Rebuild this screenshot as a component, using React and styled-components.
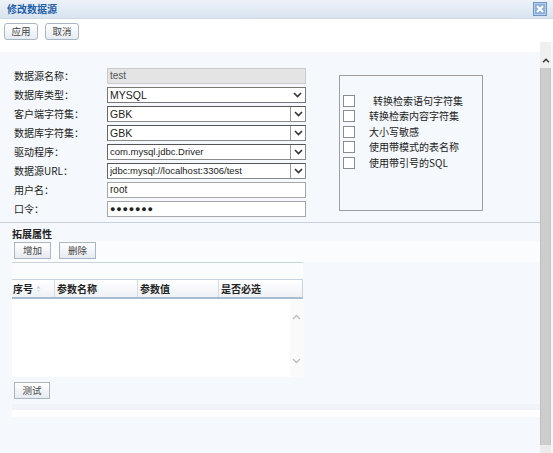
import React from 'react';
import styled, { createGlobalStyle } from 'styled-components';

const CJK = `"Noto Sans CJK SC", "Liberation Sans", sans-serif`;
const LAT = `"Liberation Sans", "Noto Sans CJK SC", sans-serif`;

const GlobalStyle = createGlobalStyle`
  html, body { margin: 0; padding: 0; }
  body { width: 553px; height: 453px; overflow: hidden; font-family: ${LAT}; }
  * { box-sizing: border-box; }
`;

const Window = styled.div`
  width: 553px;
  height: 453px;
  display: flex;
  flex-direction: column;
  background: #f5f8fc;
  overflow: hidden;
`;

const TitleBar = styled.div`
  height: 19px;
  flex: none;
  display: flex;
  align-items: center;
  justify-content: space-between;
  padding: 0 6px 0 7px;
  background: linear-gradient(#edf2f8, #d9e4f0);
  border-bottom: 1px solid #ccd9e7;
`;

const Title = styled.span`
  font: bold 10px/12px ${CJK};
  color: #1d5fa8;
`;

const Toolbar = styled.div`
  height: 23px;
  flex: none;
  background: #fff;
  display: flex;
  gap: 7px;
  padding: 4px 4px 0;
  align-items: flex-start;
`;

const Button = styled.button`
  width: ${(p) => p.$w || 34}px;
  height: 17px;
  padding: 0;
  border: 1px solid #a9b6c4;
  border-radius: ${(p) => (p.$round ? 3 : 0)}px;
  background: linear-gradient(#ffffff, #e6ebf1);
  font: 9.5px/15px ${CJK};
  color: #444;
`;

const Body = styled.div`
  flex: 1;
  min-height: 0;
  display: flex;
`;

const Main = styled.div`
  flex: 1;
  display: flex;
  flex-direction: column;
`;

const TopGap = styled.div`
  height: 10px;
  background: #fff;
`;

const FormArea = styled.div`
  display: flex;
  align-items: flex-start;
  padding: 16px 0 0 14px;
`;

const FormGrid = styled.div`
  display: grid;
  grid-template-columns: 93px 199px;
  grid-auto-rows: 16px;
  row-gap: 3px;
`;

const Label = styled.span`
  font: 10px/16px ${CJK};
  color: #222;
`;

const FieldBase = styled.div`
  height: 16px;
  display: flex;
  align-items: center;
  font: ${(p) => p.$size || 10}px/14px ${LAT};
  color: #222;
  background: #fff;
`;

const ReadOnlyField = styled(FieldBase)`
  background: #e4e4e4;
  border: 1px solid #cbcbcb;
  color: #555;
  padding-left: 2px;
`;

const TextField = styled(FieldBase)`
  border: 1px solid #a6a6a6;
  padding-left: 2px;
`;

const SelectField = styled(FieldBase)`
  border: 1px solid #777;
  padding-left: 2px;
  justify-content: space-between;
`;

const ComboField = styled(FieldBase)`
  border: 1px solid #8a8a8a;
  border-top-color: #555;
  border-left-color: #666;
  padding-left: 2px;
  justify-content: space-between;
`;

const ValueText = styled.span`
  flex: 1;
  white-space: nowrap;
  overflow: hidden;
`;

const ArrowBox = styled.span`
  width: 15px;
  height: 100%;
  display: flex;
  align-items: center;
  justify-content: center;
  border-left: ${(p) => (p.$boxed ? '1px solid #9a9a9a' : 'none')};
  background: #fff;
`;

const Dots = styled.span`
  font: bold 9px/14px ${LAT};
  letter-spacing: 0.8px;
  color: #222;
`;

const OptionsBox = styled.div`
  margin: 7px 0 0 33px;
  width: 144px;
  height: 136px;
  border: 1px solid #9e9e9e;
  padding: 17px 0 0 3px;
  display: flex;
  flex-direction: column;
`;

const OptionRow = styled.label`
  height: 15.5px;
  display: flex;
  align-items: center;
`;

const CheckBox = styled.span`
  width: 12px;
  height: 12px;
  flex: none;
  border: 1px solid #8c8c8c;
  background: #fff;
`;

const OptionText = styled.span`
  margin-left: ${(p) => p.$indent}px;
  font: 10px/14px ${CJK};
  color: #222;
  white-space: nowrap;
`;

const Divider = styled.div`
  margin-top: 5px;
  height: 1px;
  background: #c5d1de;
`;

const SectionTitle = styled.div`
  height: 18px;
  padding: 4px 0 0 12px;
  font: bold 10px/14px ${CJK};
  color: #222;
`;

const ExtBar = styled.div`
  margin-left: 12px;
  height: 21px;
  padding: 1px 0 0 2px;
  display: flex;
  gap: 8px;
  align-items: flex-start;
  background: #fbfcfe;
`;

const ExtLine = styled.div`
  margin-left: 12px;
  width: 291px;
  height: 1px;
  background: #c8d2dd;
`;

const Spacer = styled.div`
  margin-left: 12px;
  width: 291px;
  height: 16px;
  background: #fbfcfe;
`;

const Grid = styled.div`
  margin-left: 12px;
  width: 291px;
  display: flex;
  flex-direction: column;
`;

const HeaderRow = styled.div`
  height: 20px;
  display: grid;
  grid-template-columns: 42px 83px 81px 84px;
  border-top: 1px solid #c6d3e0;
  border-right: 1px solid #c6d3e0;
  border-bottom: 2px solid #a8bbcf;
  background: linear-gradient(#ffffff, #eef1f5);
`;

const HeaderCell = styled.div`
  display: flex;
  align-items: center;
  gap: 3px;
  padding-left: ${(p) => (p.$first ? 1 : 2)}px;
  border-left: ${(p) => (p.$first ? 'none' : '1px solid #d5dce4')};
  font: bold 10px/14px ${CJK};
  color: #222;
`;

const GridBody = styled.div`
  height: 78px;
  display: flex;
`;

const GridCells = styled.div`
  flex: 1;
  background: #fff;
`;

const GridScroll = styled.div`
  width: 13px;
  background: #fafafa;
  display: flex;
  flex-direction: column;
  justify-content: space-between;
  align-items: center;
  padding: 15px 0 13px;
`;

const TestRow = styled.div`
  padding: 3px 0 0 14px;
`;

const BottomStrip = styled.div`
  margin: 5px 0 0 12px;
  height: 13px;
  background: linear-gradient(#f0f3f7 0 6px, #ffffff 6px);
`;

const Scrollbar = styled.div`
  width: 11px;
  margin-right: 2px;
  display: flex;
  flex-direction: column;
`;

const ScrollTop = styled.div`
  height: 26px;
  background: #f0f0f0;
  display: flex;
  justify-content: center;
  align-items: flex-end;
  padding-bottom: 5px;
`;

const ScrollThumb = styled.div`
  flex: 1;
  background: #cdcdcd;
  border-left: 1px solid #c0c0c0;
  border-right: 1px solid #c4c4c4;
`;

const ScrollBottom = styled.div`
  height: 8px;
  background: #ebebeb;
`;

const Chevron = ({ up, color = '#333', w = 9, h = 6, sw = 1.6 }) => (
  <svg width={w} height={h} viewBox="0 0 9 6">
    <polyline
      points={up ? '1,5 4.5,1.5 8,5' : '1,1 4.5,4.5 8,1'}
      fill="none"
      stroke={color}
      strokeWidth={sw}
    />
  </svg>
);

const CloseIcon = () => (
  <svg width="14" height="14" viewBox="0 0 14 14">
    <rect x="0.5" y="0.5" width="13" height="13" fill="#8ab0da" stroke="#6f98c7" />
    <rect x="1.5" y="1.5" width="11" height="11" fill="none" stroke="#b5cde8" />
    <path d="M4 4 L10 10 M10 4 L4 10" stroke="#fff" strokeWidth="2" />
  </svg>
);

const SortIcon = () => (
  <svg width="5" height="8" viewBox="0 0 5 8">
    <path d="M0.5 3.5 L2.5 1 L4.5 3.5 Z" fill="#c3cbd4" />
    <path d="M0.5 5 L2.5 7.5 L4.5 5 Z" fill="#dfe4ea" />
  </svg>
);

const options = [
  { text: '转换检索语句字符集', indent: 18 },
  { text: '转换检索内容字符集', indent: 14 },
  { text: '大小写敏感', indent: 14 },
  { text: '使用带模式的表名称', indent: 14 },
  { text: '使用带引号的SQL', indent: 14 },
];

export default function App() {
  return (
    <>
      <GlobalStyle />
      <Window>
        <TitleBar>
          <Title>修改数据源</Title>
          <CloseIcon />
        </TitleBar>
        <Toolbar>
          <Button $round>应用</Button>
          <Button $round>取消</Button>
        </Toolbar>
        <Body>
          <Main>
            <TopGap />
            <FormArea>
              <FormGrid>
                <Label>数据源名称：</Label>
                <ReadOnlyField>test</ReadOnlyField>

                <Label>数据库类型：</Label>
                <SelectField $size={10.5}>
                  <ValueText>MYSQL</ValueText>
                  <ArrowBox><Chevron /></ArrowBox>
                </SelectField>

                <Label>客户端字符集：</Label>
                <ComboField $size={10.5}>
                  <ValueText>GBK</ValueText>
                  <ArrowBox $boxed><Chevron /></ArrowBox>
                </ComboField>

                <Label>数据库字符集：</Label>
                <ComboField $size={10.5}>
                  <ValueText>GBK</ValueText>
                  <ArrowBox $boxed><Chevron /></ArrowBox>
                </ComboField>

                <Label>驱动程序：</Label>
                <ComboField $size={9.5}>
                  <ValueText>com.mysql.jdbc.Driver</ValueText>
                  <ArrowBox $boxed><Chevron /></ArrowBox>
                </ComboField>

                <Label>数据源URL：</Label>
                <ComboField $size={9.5}>
                  <ValueText>jdbc:mysql://localhost:3306/test</ValueText>
                  <ArrowBox $boxed><Chevron /></ArrowBox>
                </ComboField>

                <Label>用户名：</Label>
                <TextField>root</TextField>

                <Label>口令：</Label>
                <TextField><Dots>●●●●●●●</Dots></TextField>
              </FormGrid>
              <OptionsBox>
                {options.map((o) => (
                  <OptionRow key={o.text}>
                    <CheckBox />
                    <OptionText $indent={o.indent}>{o.text}</OptionText>
                  </OptionRow>
                ))}
              </OptionsBox>
            </FormArea>
            <Divider />
            <SectionTitle>拓展属性</SectionTitle>
            <ExtBar>
              <Button $w={37}>增加</Button>
              <Button $w={37}>删除</Button>
            </ExtBar>
            <ExtLine />
            <Spacer />
            <Grid>
              <HeaderRow>
                <HeaderCell $first>序号<SortIcon /></HeaderCell>
                <HeaderCell>参数名称</HeaderCell>
                <HeaderCell>参数值</HeaderCell>
                <HeaderCell>是否必选</HeaderCell>
              </HeaderRow>
              <GridBody>
                <GridCells />
                <GridScroll>
                  <Chevron up color="#bdbdbd" sw={1.3} />
                  <Chevron color="#bdbdbd" sw={1.3} />
                </GridScroll>
              </GridBody>
            </Grid>
            <TestRow>
              <Button $w={36}>测试</Button>
            </TestRow>
            <BottomStrip />
          </Main>
          <Scrollbar>
            <ScrollTop><Chevron up w={8} h={5} sw={1.8} /></ScrollTop>
            <ScrollThumb />
            <ScrollBottom />
          </Scrollbar>
        </Body>
      </Window>
    </>
  );
}
